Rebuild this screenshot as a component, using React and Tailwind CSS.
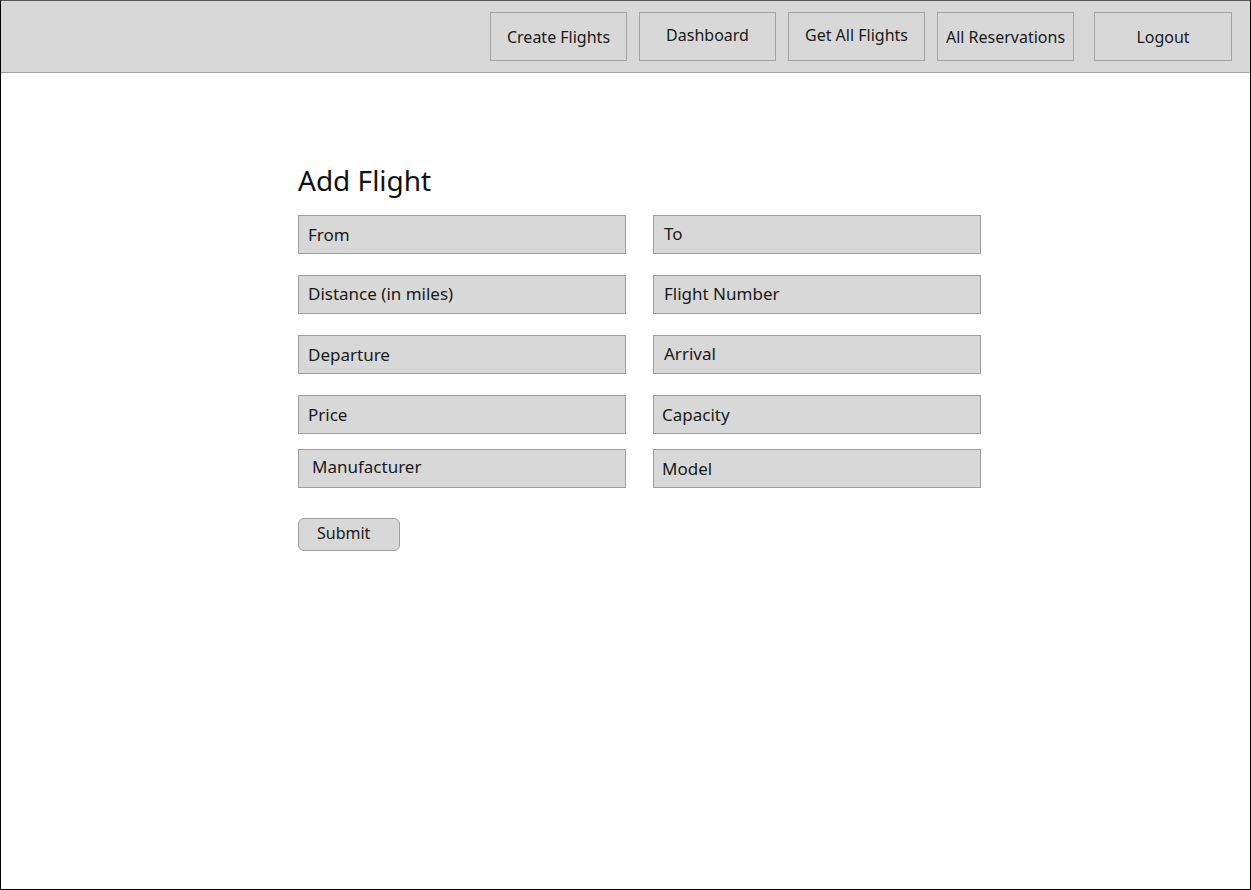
const navItems = [
  { label: "Create Flights", cls: "pt-[12px]" },
  { label: "Dashboard", cls: "pt-[10px]" },
  { label: "Get All Flights", cls: "pt-[10px]" },
  { label: "All Reservations", cls: "pt-[12px]" },
];

const fields = [
  [{ label: "From", pad: "pl-[9px] pt-[1px]" }, { label: "To", pad: "pl-[10px] pb-[2px]" }],
  [{ label: "Distance (in miles)", pad: "pl-[9px] pb-[1px]" }, { label: "Flight Number", pad: "pl-[10px] pb-[1px]" }],
  [{ label: "Departure", pad: "pl-[9px] pt-[1px]" }, { label: "Arrival", pad: "pl-[10px] pb-[1px]" }],
  [{ label: "Price", pad: "pl-[9px] pt-[1px]" }, { label: "Capacity", pad: "pl-[8px] pt-[1px]" }],
  [{ label: "Manufacturer", pad: "pl-[13px] pb-[3px]" }, { label: "Model", pad: "pl-[8px] pt-[1px]" }],
];

const NavButton = ({ label, className = "" }) => (
  <div
    className={`h-[49px] border border-[#a3a3a3] bg-[#d8d8d8] text-center text-[16px] text-[#1a1a1a] ${className}`}
  >
    {label}
  </div>
);

const Field = ({ label, pad }) => (
  <div
    className={`w-[328px] h-[39px] border border-[#9e9e9e] bg-[#d8d8d8] flex items-center pr-[9px] text-[17px] text-[#1a1a1a] ${pad}`}
  >
    {label}
  </div>
);

export default function App() {
  return (
    <div
      className="w-[1251px] h-[890px] border border-black border-t-[#555] bg-white flex flex-col"
      style={{ fontFamily: '"Noto Sans", "Open Sans", sans-serif' }}
    >
      {/* barre du haut */}
      <header className="h-[72px] bg-[#d8d8d8] border-b border-[#a0a0a0] flex justify-end items-start pt-[11px] pr-[18px]">
        <div className="flex gap-[12px]">
          {navItems.map((n) => (
            <NavButton key={n.label} label={n.label} className={`w-[137px] ${n.cls}`} />
          ))}
        </div>
        <NavButton label="Logout" className="w-[138px] ml-[20px] pt-[12px]" />
      </header>

      {/* formulaire */}
      <main className="pl-[297px] pt-[89px]">
        <h1 className="text-[28px] leading-[36px] text-[#111] mb-[17px]">Add Flight</h1>
        <div className="flex flex-col gap-[21px]">
          {fields.slice(0, 4).map(([a, b]) => (
            <div key={a.label} className="flex gap-[27px]">
              <Field {...a} />
              <Field {...b} />
            </div>
          ))}
        </div>
        <div className="flex gap-[27px] mt-[15px]">
          <Field {...fields[4][0]} />
          <Field {...fields[4][1]} />
        </div>
        <button className="mt-[30px] w-[102px] h-[33px] rounded-[6px] border border-[#9e9e9e] bg-[#d8d8d8] text-[16px] text-[#1a1a1a] text-left pl-[18px] pb-[3px]">
          Submit
        </button>
      </main>
    </div>
  );
}
